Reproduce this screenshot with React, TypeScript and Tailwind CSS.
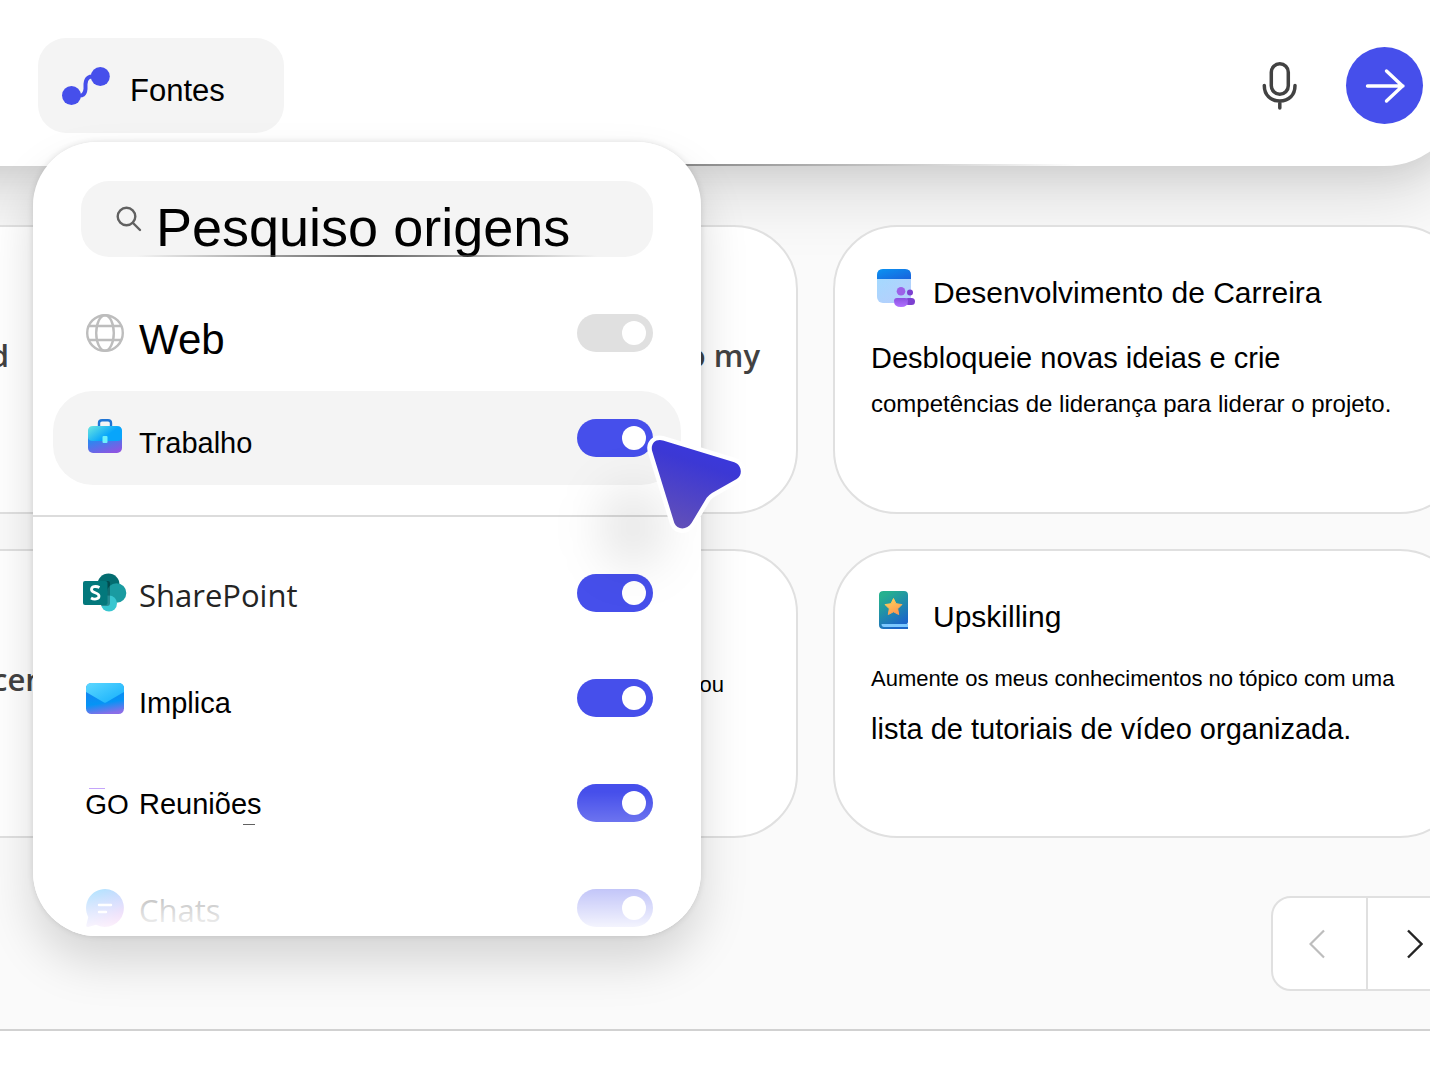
import { useState } from 'react';

const SourcesIcon = () => (
  <svg width="48" height="38" viewBox="0 0 48 38" fill="none">
    <path
      d="M14 28 C21 30 23 27 23.500 22 V17 C24 11 27 8.500 34 10"
      stroke="#464feb"
      strokeWidth="4"
    />
    <circle cx="9.500" cy="28.500" r="9.500" fill="#464feb" />
    <circle cx="38.300" cy="9.500" r="9.500" fill="#464feb" />
  </svg>
);

const MicIcon = () => (
  <svg
    width="36"
    height="48"
    viewBox="0 0 36 48"
    fill="none"
    stroke="#424242"
    strokeWidth="3.500"
    strokeLinecap="round"
  >
    <rect x="9.300" y="1.800" width="17" height="30.500" rx="8.500" />
    <path d="M2.300 23.500 C2.300 33 8.500 39 17.800 39 S33 33 33 23.500 M17.800 39 V46" />
  </svg>
);

const ArrowIcon = () => (
  <svg
    width="40"
    height="36"
    viewBox="0 0 40 36"
    fill="none"
    stroke="white"
    strokeWidth="3.400"
    strokeLinecap="round"
    strokeLinejoin="round"
  >
    <path d="M2.500 18 H38 M21.500 3 L37.500 18 L21.500 33" />
  </svg>
);

const SearchIcon = () => (
  <svg
    width="26"
    height="26"
    viewBox="0 0 26 26"
    fill="none"
    stroke="#616161"
    strokeWidth="2.400"
    strokeLinecap="round"
    className="shrink-0"
  >
    <circle cx="10.500" cy="10.500" r="8.800" />
    <path d="M17 17 L24 24" />
  </svg>
);

const GlobeIcon = () => (
  <svg
    width="38"
    height="38"
    viewBox="0 0 38 38"
    fill="none"
    stroke="#bdbdbd"
    strokeWidth="2.400"
  >
    <circle cx="19" cy="19" r="17.800" />
    <ellipse cx="19" cy="19" rx="8.800" ry="17.800" />
    <path d="M2.800 12 H35.200 M2.800 26 H35.200" />
  </svg>
);

const BriefcaseIcon = () => (
  <svg width="36" height="38" viewBox="0 0 36 38">
    <defs>
      <linearGradient id="caseTop" x1="0" y1="0" x2="1" y2="0.6">
        <stop offset="0" stopColor="#6ce8e0" />
        <stop offset="0.7" stopColor="#08a5fb" />
      </linearGradient>
      <linearGradient id="caseBottom" x1="0.3" y1="0" x2="0.7" y2="1">
        <stop offset="0.4" stopColor="#2c87f0" />
        <stop offset="1" stopColor="#8c55e2" />
      </linearGradient>
    </defs>
    <path
      d="M12 9 V4 Q12 1.200 15 1.200 H21 Q24 1.200 24 4 V9"
      fill="none"
      stroke="#1f74d4"
      strokeWidth="2.400"
    />
    <rect x="1" y="8" width="34" height="26" rx="5" fill="url(#caseBottom)" />
    <path
      d="M6 7 H30 Q35 7 35 12 V18 Q35 22 30 22 H6 Q1 22 1 18 V12 Q1 7 6 7Z"
      fill="url(#caseTop)"
    />
    <rect x="15.500" y="17" width="5" height="7" rx="1" fill="#6df0fa" />
  </svg>
);

const SharePointIcon = () => (
  <svg width="44" height="40" viewBox="0 0 44 40">
    <circle cx="25.500" cy="11.500" r="11" fill="#036c70" />
    <circle cx="33.500" cy="20" r="9.800" fill="#1a9ba1" />
    <circle cx="26" cy="30.500" r="8" fill="#37c6d0" />
    <path
      d="M22 8 H25 Q27 8 27 10 V30 Q27 33 24 33 H18 V8Z"
      fill="#000"
      opacity="0.300"
    />
    <rect x="0" y="8" width="24.500" height="24" rx="2" fill="#03787c" />
    <path
      d="M16.500 14.500 C12.500 12.500 8.500 13.700 8.500 16.500 C8.500 20.500 16 19 16 23 C16 26.500 11 26.800 8 25"
      fill="none"
      stroke="white"
      strokeWidth="2.800"
    />
  </svg>
);

const MailIcon = () => (
  <svg width="38" height="32" viewBox="0 0 38 32">
    <defs>
      <linearGradient id="mailBody" x1="0.3" y1="0" x2="0.5" y2="1">
        <stop offset="0" stopColor="#1a7cf0" />
        <stop offset="0.65" stopColor="#0594f5" />
        <stop offset="1" stopColor="#8a6ee8" />
      </linearGradient>
      <linearGradient id="mailFlap" x1="0" y1="0" x2="1" y2="1">
        <stop offset="0" stopColor="#5ed8ff" />
        <stop offset="1" stopColor="#12aefc" />
      </linearGradient>
    </defs>
    <rect y="1" width="38" height="31" rx="5.500" fill="url(#mailBody)" />
    <path
      d="M0 10 V6.500 Q0 1 5.500 1 H32.500 Q38 1 38 6.500 V10 L20 20.500 Q19 21 18 20.500Z"
      fill="url(#mailFlap)"
    />
  </svg>
);

const ChatIcon = () => (
  <svg width="38" height="38" viewBox="0 0 38 38">
    <defs>
      <linearGradient id="chatBubble" x1="0.2" y1="0" x2="0.7" y2="1">
        <stop offset="0" stopColor="#0fafff" />
        <stop offset="0.6" stopColor="#6a75f8" />
        <stop offset="1" stopColor="#cc23d1" />
      </linearGradient>
    </defs>
    <path
      d="M19 0 A19 19 0 1 1 10 35.800 L2 38 Q0 38 0.300 36 L2.300 28 A19 19 0 0 1 19 0Z"
      fill="url(#chatBubble)"
    />
    <path
      d="M13 16 H25 M13 23 H20"
      stroke="white"
      strokeWidth="2.400"
      strokeLinecap="round"
    />
  </svg>
);

const CareerIcon = () => (
  <svg width="38" height="39" viewBox="0 0 38 39">
    <defs>
      <linearGradient id="careerBar" x1="0" y1="0" x2="1" y2="1">
        <stop offset="0" stopColor="#0a93f2" />
        <stop offset="1" stopColor="#1a62dc" />
      </linearGradient>
      <linearGradient id="careerBody" x1="0" y1="0" x2="0.6" y2="1">
        <stop offset="0" stopColor="#a0dcff" />
        <stop offset="1" stopColor="#b5cffc" />
      </linearGradient>
      <linearGradient id="careerPeople" x1="0" y1="0" x2="0" y2="1">
        <stop offset="0" stopColor="#8a50e0" />
        <stop offset="1" stopColor="#b070ff" />
      </linearGradient>
    </defs>
    <rect width="34" height="34" rx="6" fill="url(#careerBody)" />
    <path d="M0 10 V6 Q0 0 6 0 H28 Q34 0 34 6 V10Z" fill="url(#careerBar)" />
    <circle cx="33" cy="23.500" r="3" fill="#7c40d0" />
    <rect x="28" y="29" width="10" height="7" rx="3.500" fill="#7c40d0" />
    <circle cx="24" cy="22.300" r="4.300" fill="#9c60e8" />
    <path
      d="M20 29 H28 Q31 29 31 32 Q31 38 24 38 T17 32 Q17 29 20 29Z"
      fill="url(#careerPeople)"
    />
  </svg>
);

const BookIcon = () => (
  <svg width="38" height="38" viewBox="0 0 38 38" className="mb-1">
    <defs>
      <linearGradient id="bookCover" x1="0" y1="0" x2="0.5" y2="1">
        <stop offset="0.150" stopColor="#25b08f" />
        <stop offset="1" stopColor="#1b66c8" />
      </linearGradient>
      <linearGradient id="bookStar" x1="0" y1="0" x2="0.5" y2="1">
        <stop offset="0" stopColor="#ffd95a" />
        <stop offset="1" stopColor="#ff9a50" />
      </linearGradient>
    </defs>
    <path
      d="M6.500 0 H27 Q31 0 31 4 V31 Q31 33 29.500 33 V36 H31 V38 H6.500 Q2 38 2 34 V4 Q2 0 6.500 0Z"
      fill="url(#bookCover)"
    />
    <path d="M4.500 33 H31 V36 H7 Q4.500 36 4.500 33Z" fill="#7cc8ff" />
    <path
      d="M16.500 7.500 L19 12.700 L24.900 13.600 L20.700 17.800 L21.700 23.500 L16.500 20.800 L11.300 23.500 L12.300 17.800 L8.100 13.600 L14 12.700Z"
      fill="url(#bookStar)"
      stroke="url(#bookStar)"
      strokeLinejoin="round"
    />
  </svg>
);

const PointerIcon = () => (
  <svg width="108" height="104" viewBox="0 0 108 104">
    <defs>
      <linearGradient id="pointerFill" x1="0.6" y1="0.1" x2="0.3" y2="1">
        <stop offset="0" stopColor="#3a38dc" />
        <stop offset="0.2" stopColor="#3c38d4" />
        <stop offset="1" stopColor="#6250b8" />
      </linearGradient>
    </defs>
    <path
      d="M12.300 20.500 C10 13 15.500 7.200 23 9.500 L94.300 31.300 C102 34 103 44 96.700 48 L72 62 Q69 64 66.700 66.700 L51.700 91.700 C47 99.500 37 99 34.300 92Z"
      fill="url(#pointerFill)"
      stroke="white"
      strokeWidth="9"
      strokeLinejoin="round"
      paintOrder="stroke"
    />
  </svg>
);

const arial = 'font-["Liberation_Sans",Arial,sans-serif] text-black mt-3';
const segoe = 'font-["Open_Sans",sans-serif] text-[#242424] mt-1 text-[31px]';

const workSources = [
  {
    id: 'sharepoint',
    label: 'SharePoint',
    icon: <SharePointIcon />,
    style: segoe,
  },
  {
    id: 'mail',
    label: 'Implica',
    icon: <MailIcon />,
    style: `${arial} text-[29px]`,
  },
  {
    id: 'meetings',
    label: 'Reuniões',
    icon: (
      <span className="relative z-10 mt-1 pl-1 text-[28px] text-black">
        <span className="absolute top-1 left-2 h-px w-4 bg-[#c4a5fa]" />
        GO
      </span>
    ),
    style:
      'relative z-10 mt-1 font-["Liberation_Sans",Arial,sans-serif] text-black text-[29px] after:absolute after:bottom-0.5 after:left-[104px] after:h-px after:w-3 after:bg-[#616161]',
  },
  { id: 'chats', label: 'Chats', icon: <ChatIcon />, style: segoe },
];

const SourceRow = ({ id, label, icon, style, checked, onChange, active }: any) => (
  <div
    className={`flex h-[94px] shrink-0 items-center rounded-[40px] pr-7 pl-[30px] ${
      active ? 'bg-[#f4f4f4]' : ''
    }`}
  >
    <span className="flex w-11 shrink-0 justify-center">{icon}</span>
    <label htmlFor={id} className={`ml-3 grow ${style}`}>
      {label}
    </label>
    <input
      id={id}
      type="checkbox"
      role="switch"
      checked={checked}
      onChange={() => onChange(id)}
      className="flex h-[38px] w-[76px] shrink-0 appearance-none items-center justify-end rounded-full bg-[#e0e0e0] pr-[7px] before:size-6 before:rounded-full before:bg-white checked:bg-[#464feb]"
    />
  </div>
);

const SourcesMenu = () => {
  const [enabled, setEnabled] = useState<string[]>([
    'work',
    'sharepoint',
    'mail',
    'meetings',
    'chats',
  ]);

  const toggle = (id: string) => {
    setEnabled((prev) =>
      prev.includes(id) ? prev.filter((x) => x !== id) : [...prev, id]
    );
  };

  return (
    <div className="absolute top-[142px] left-[33px] w-[668px] rounded-[64px] shadow-[0_26px_48px_rgba(0,0,0,0.15),0_0_6px_rgba(0,0,0,0.12)]">
      <div className="relative flex h-[794px] flex-col overflow-hidden rounded-[64px] bg-white pt-[39px]">
        <div className="relative mx-12 flex h-[76px] shrink-0 items-center rounded-[28px] bg-[#f4f4f4] pl-[35px]">
          <SearchIcon />
          <input
            type="text"
            aria-label="Pesquiso origens"
            placeholder="Pesquiso origens"
            className="ml-3.5 h-full w-full min-w-0 bg-transparent pt-4 text-[54px] text-black outline-none placeholder:text-black"
          />
          <div className="absolute bottom-0 left-14 h-0.5 w-[460px] bg-linear-to-r from-transparent via-[#616161] to-transparent" />
        </div>

        <div className="mx-5 mt-[29px] flex flex-col gap-[11px]">
          <SourceRow
            id="web"
            label="Web"
            icon={<GlobeIcon />}
            style={`${arial} text-[42px]`}
            checked={enabled.includes('web')}
            onChange={toggle}
          />
          <SourceRow
            id="work"
            label="Trabalho"
            icon={<BriefcaseIcon />}
            style={`${arial} text-[29px]`}
            checked={enabled.includes('work')}
            onChange={toggle}
            active
          />
        </div>

        <hr className="mt-[30px] border-t-2 border-[#dcdcdc]" />

        <div className="mx-5 mt-[29px] flex flex-col gap-[11px]">
          {workSources.map((source) => (
            <SourceRow
              key={source.id}
              {...source}
              checked={enabled.includes(source.id)}
              onChange={toggle}
            />
          ))}
        </div>

        <div className="pointer-events-none absolute inset-x-0 bottom-0 h-36 bg-linear-to-b from-white/0 to-white" />
        <div className="pointer-events-none absolute top-[345px] left-[570px] h-[80px] w-[60px] rounded-full bg-black/10 blur-xl" />
      </div>
      <div className="pointer-events-none absolute top-[289px] left-[607px]">
        <PointerIcon />
      </div>
    </div>
  );
};

const SuggestionCard = ({ icon, title, lines, children }: any) => (
  <article className="h-[289px] rounded-[64px] border-2 border-[#e0e0e0] bg-white px-9 pt-[37px]">
    <div className="flex h-12 items-center pl-[6px]">
      {icon}
      <h2 className="mt-2 ml-[18px] text-[30px]">{title}</h2>
    </div>
    <div className={`whitespace-nowrap ${lines}`}>{children}</div>
  </article>
);

const App = () => {
  return (
    <div className='relative flex min-h-screen flex-col overflow-hidden bg-[#fafafa] font-["Liberation_Sans",Arial,sans-serif] text-black'>
      <header className="relative -mr-[34px] -ml-20 h-[166px] rounded-br-[80px] bg-white pt-[38px] pr-[41px] pl-[118px] shadow-[0_32px_64px_rgba(0,0,0,0.12),0_8px_32px_rgba(0,0,0,0.08)]">
        <div className="flex h-[95px] items-center">
          <button className="flex h-full w-[246px] items-center rounded-[28px] bg-[#f4f4f4] pl-6 text-[31px]">
            <SourcesIcon />
            <span className="mt-3 ml-5">Fontes</span>
          </button>
          <button aria-label="Microfone" className="mr-12 ml-auto">
            <MicIcon />
          </button>
          <button
            aria-label="Enviar"
            className="flex size-[77px] items-center justify-center rounded-full bg-[#464feb]"
          >
            <ArrowIcon />
          </button>
        </div>
        <div className="absolute bottom-0 left-1/4 h-0.5 w-1/2 bg-linear-to-r from-transparent via-[#8a8a8a] to-transparent" />
      </header>

      <main className="relative -mr-[34px] -ml-[499px]">
        <div className="mt-[59px] grid grid-cols-3 gap-[35px]">
          <article className='h-[289px] rounded-[64px] border-2 border-[#e0e0e0] bg-white pt-[104px] pr-[121px] text-right font-["Open_Sans",sans-serif] text-[31px] leading-12 font-semibold text-[#424242]'>
            d
          </article>
          <article className='h-[289px] rounded-[64px] border-2 border-[#e0e0e0] bg-white pt-[104px] pr-9 text-right font-["Open_Sans",sans-serif] text-[31px] leading-12 font-semibold text-[#424242]'>
            to my
          </article>
          <SuggestionCard
            icon={<CareerIcon />}
            title="Desenvolvimento de Carreira"
            lines="mt-[23px] leading-[46px]"
          >
            <p className="text-[29px]">Desbloqueie novas ideias e crie</p>
            <p className="text-[24px]">
              competências de liderança para liderar o projeto.
            </p>
          </SuggestionCard>
          <article className='h-[289px] rounded-[64px] border-2 border-[#e0e0e0] bg-white pt-[104px] pr-[85px] text-right font-["Open_Sans",sans-serif] text-[31px] leading-12 font-semibold text-[#424242]'>
            cen
          </article>
          <article className="h-[289px] rounded-[64px] border-2 border-[#e0e0e0] bg-white pt-[110px] pr-[72px] text-right text-[22px] leading-12">
            ou
          </article>
          <SuggestionCard
            icon={<BookIcon />}
            title="Upskilling"
            lines="mt-[17px] leading-[51px]"
          >
            <p className="text-[22px]">
              Aumente os meus conhecimentos no tópico com uma
            </p>
            <p className="text-[29px]">lista de tutoriais de vídeo organizada.</p>
          </SuggestionCard>
        </div>

        <nav className="mt-[58px] ml-auto flex h-[95px] w-[193px] divide-x-2 divide-[#e0e0e0] rounded-[20px] border-2 border-[#e0e0e0] bg-white">
          <button
            aria-label="Anterior"
            disabled
            className="flex w-1/2 items-center justify-center pr-1"
          >
            <svg width="16" height="30" viewBox="0 0 16 30" fill="none">
              <path d="M15 1.500 L1.500 15 L15 28.500" stroke="#bdbdbd" strokeWidth="2.200" />
            </svg>
          </button>
          <button
            aria-label="Seguinte"
            className="flex w-1/2 items-center justify-center"
          >
            <svg width="16" height="30" viewBox="0 0 16 30" fill="none">
              <path d="M1 1.500 L14.500 15 L1 28.500" stroke="#242424" strokeWidth="2.400" />
            </svg>
          </button>
        </nav>
      </main>

      <footer className="mt-[38px] grow border-t-2 border-[#d1d1d1] bg-white" />

      <SourcesMenu />
    </div>
  );
};

export default App;
